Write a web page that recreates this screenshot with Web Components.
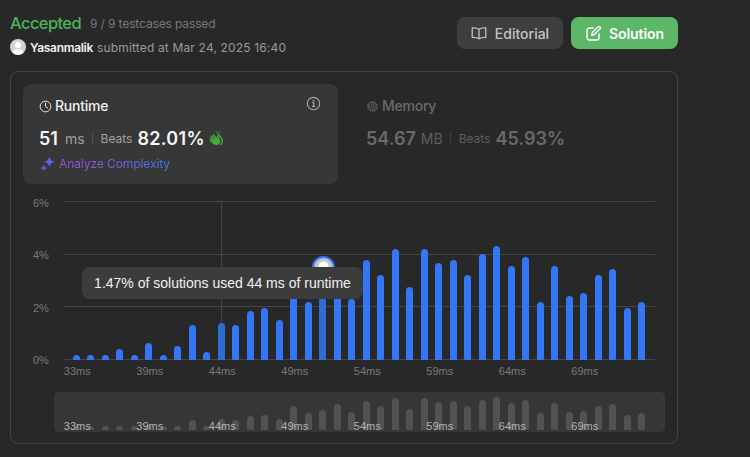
<!DOCTYPE html>
<html><head><meta charset="utf-8"><title>Submission</title>
<style>
html,body{margin:0;height:100%;background:#282828;overflow:hidden}
body{font-family:Inter,"Liberation Sans",sans-serif;color:#fff}
</style></head><body>
<lc-page>
  <lc-header slot="header"></lc-header>
  <lc-panel>
    <lc-stat slot="stats" active label="Runtime" icon="clock" value="51" unit="ms" beats="82.01%"></lc-stat>
    <lc-stat slot="stats" label="Memory" icon="chip" value="54.67" unit="MB" beats="45.93%"></lc-stat>
    <lc-chart slot="chart"></lc-chart>
  </lc-panel>
</lc-page>
<script>
const ICONS={
 clock:'<circle cx="8" cy="8" r="6.6" fill="none" stroke="currentColor" stroke-width="1.2"/><path d="M8 3.8V8l2.8 1.8" fill="none" stroke="currentColor" stroke-width="1.2" stroke-linecap="round"/>',
 chip:'<rect x="3.6" y="3.6" width="8.8" height="8.8" rx="1.6" fill="none" stroke="currentColor" stroke-width="1.1"/><rect x="6" y="6" width="4" height="4" rx=".6" fill="none" stroke="currentColor" stroke-width="1.1"/><path d="M5.5 1.5v1.8M8 1.5v1.8M10.5 1.5v1.8M5.5 12.7v1.8M8 12.7v1.8M10.5 12.7v1.8M1.5 5.5h1.8M1.5 8h1.8M1.5 10.5h1.8M12.7 5.5h1.8M12.7 8h1.8M12.7 10.5h1.8" stroke="currentColor" stroke-width="1"/>',
 info:'<circle cx="8" cy="8" r="6.6" fill="none" stroke="currentColor" stroke-width="1.2"/><circle cx="8" cy="4.9" r="1" fill="currentColor"/><path d="M6.5 7.2H8.3V11M6.4 11.2h3.4" fill="none" stroke="currentColor" stroke-width="1.3"/>',
 book:'<path d="M8 4.2C6.6 3 4.4 2.6 1.2 2.8V12.4C4.4 12.3 6.6 12.7 8 13.8 9.4 12.7 11.6 12.3 14.8 12.4V2.8C11.6 2.6 9.4 3 8 4.2ZM8 4.2V13.8" fill="none" stroke="currentColor" stroke-width="1.25" stroke-linejoin="round"/>',
 edit:'<path d="M8 3H4.2A2.2 2.2 0 0 0 2 5.2V12.8A2.2 2.2 0 0 0 4.2 15H11.8A2.2 2.2 0 0 0 14 12.8V9" fill="none" stroke="currentColor" stroke-width="1.4" stroke-linecap="round"/><path d="M6.8 10.2 7.4 7.4 13 1.8A1.3 1.3 0 0 1 15 3.8L9.4 9.5Z" fill="none" stroke="currentColor" stroke-width="1.4" stroke-linejoin="round"/>',
 sparkle:'<defs><linearGradient id="sg" x1="0" y1="1" x2="1" y2="0"><stop offset="0" stop-color="#4f62f2"/><stop offset="1" stop-color="#7a58e6"/></linearGradient></defs><path fill="url(#sg)" d="M10 .8 11.6 4.6 15.6 6.3 11.6 8 10 11.8 8.4 8 4.4 6.3 8.4 4.6ZM4 9 5.1 11.7 7.8 12.8 5.1 13.9 4 16.6 2.9 13.9.2 12.8 2.9 11.7Z"/>',
 clap:'<g stroke="#46a83c" stroke-linecap="round" fill="none" stroke-width="1.6"><path d="M1.6 7.6 6 11.8M2.6 5.4 7 10M4.8 4.2 8.500 8.500M1.600 10.200 5 13.400"/><path d="M9.200 6 10.700 10"/><path d="M9.400 3.200 13 7.500C14.700 10 14.300 12.500 12.600 14.300"/></g><ellipse cx="8" cy="11.300" rx="3.800" ry="3.600" fill="#46a83c"/><path d="M7.800.4 8.200 1.900M10 .2V1.800M12.100.8 11.600 2.200" stroke="#46a83c" stroke-width=".8" fill="none"/>',
 user:'<circle cx="8" cy="8" r="8" fill="#d4d4d4"/><circle cx="8" cy="6" r="3.1" fill="#fff"/><path d="M2.500 13.600C3.500 11 5.600 10 8 10S12.500 11 13.500 13.600A8 8 0 0 1 2.500 13.600Z" fill="#fff"/>'
};
class LcIcon extends HTMLElement{
  constructor(){super();this.attachShadow({mode:'open'});}
  connectedCallback(){
    const s=this.getAttribute('size')||16;
    this.shadowRoot.innerHTML=`<style>:host{display:inline-flex;flex:none;width:${s}px;height:${s}px}svg{display:block;width:100%;height:100%}</style><svg viewBox="0 0 16 16">${ICONS[this.getAttribute('name')]}</svg>`;
  }
}
class LcPage extends HTMLElement{
  constructor(){super();this.attachShadow({mode:'open'}).innerHTML=`<style>:host{display:flex;flex-direction:column;gap:16px;width:668px;padding:11px 0 0 10px;font-family:Inter,"Liberation Sans",sans-serif}</style><slot name="header"></slot><slot></slot>`;}
}
class LcBtn extends HTMLElement{
  constructor(){super();this.attachShadow({mode:'open'}).innerHTML=`<style>:host{display:inline-flex;align-items:center;justify-content:center;gap:8px;height:32px;border-radius:8px;font-size:14px;font-weight:500;box-sizing:border-box;background:var(--bg);color:var(--fg)}</style><slot></slot>`;}
}
class LcHeader extends HTMLElement{
  constructor(){super();this.attachShadow({mode:'open'}).innerHTML=`<style>
  :host{display:flex;justify-content:space-between;align-items:flex-start}
  .left{display:flex;flex-direction:column;gap:4px}
  .r1{display:flex;align-items:center;height:24px;gap:9px}
  .acc{font-size:16.5px;font-weight:500;color:#4cb45a;letter-spacing:-.6px;line-height:24px}
  .tc{font-size:12px;color:#787878;letter-spacing:-.13px}
  .r2{display:flex;align-items:center;height:16px;font-size:12px;color:#9a9a9a;gap:4px}
  .name{color:#f2f2f2;font-weight:600;letter-spacing:-.3px}
  .sub{letter-spacing:.16px}
  .btns{display:flex;gap:8px;margin-top:6px}
  .e{--bg:#3e3e3e;--fg:#c4c4c8;width:106px}
  .s{--bg:#5cb768;--fg:#fff;width:107px;font-weight:600;letter-spacing:-.1px}
  </style>
  <div class="left"><div class="r1"><span class="acc">Accepted</span><span class="tc">9 / 9 testcases passed</span></div>
  <div class="r2"><lc-icon name="user" size="16"></lc-icon><span class="name">Yasanmalik</span><span class="sub">submitted at Mar 24, 2025 16:40</span></div></div>
  <div class="btns"><lc-btn class="e"><lc-icon name="book"></lc-icon><span>Editorial</span></lc-btn><lc-btn class="s"><lc-icon name="edit"></lc-icon><span>Solution</span></lc-btn></div>`;}
}
class LcPanel extends HTMLElement{
  constructor(){super();this.attachShadow({mode:'open'}).innerHTML=`<style>
  :host{display:flex;flex-direction:column;gap:13px;box-sizing:border-box;width:668px;height:373px;padding:12px;border:1px solid #454545;border-radius:8px}
  .stats{display:grid;grid-template-columns:315px 315px;gap:12px}
  </style><div class="stats"><slot name="stats"></slot></div><slot name="chart"></slot>`;}
}
class LcStat extends HTMLElement{
  constructor(){super();this.attachShadow({mode:'open'});}
  connectedCallback(){
    const a=this.hasAttribute('active'),g=n=>this.getAttribute(n);
    this.shadowRoot.innerHTML=`<style>
    :host{display:flex;flex-direction:column;box-sizing:border-box;height:100px;padding:12px 17px 0 16px;border-radius:8px;background:${a?'#373737':'transparent'}}
    .top{display:flex;justify-content:space-between;align-items:flex-start;height:20px}
    .lab{display:flex;align-items:center;gap:2px;font-size:14px;font-weight:500;line-height:20px;letter-spacing:-.25px;color:${a?'#f0f0f0':'#6a6a6a'}}
    .lab lc-icon{margin-right:1px}
    .nums{display:flex;align-items:center;height:28px;margin-top:8px;color:${a?'#f5f5f5':'#6a6a6a'}}
    .v{font-size:18px;font-weight:600}
    .v.pct{letter-spacing:${a?'.3px':'0'}}
    .u{font-size:14px;color:${a?'#a0a0a0':'#5e5e5e'};margin-left:${a?7:5}px}
    .d{width:1px;height:12px;background:${a?'#505050':'#3e3e3e'};margin:0 8px 0 7px}
    .b{font-size:12px;color:${a?'#a0a0a0':'#5e5e5e'};margin-right:${a?5:5}px}
    .az{display:flex;align-items:center;gap:4px;height:16px;margin-top:3px;margin-left:1px;font-size:12px;letter-spacing:-.08px}
    .az span{background:linear-gradient(90deg,#a050d0,#3f75f0);-webkit-background-clip:text;background-clip:text;color:transparent}
    .info{color:#a8a8a8}
    .clap{margin-left:4px}
    </style>
    <div class="top"><div class="lab"><lc-icon name="${g('icon')}" size="13"></lc-icon><span>${g('label')}</span></div>${a?'<lc-icon class="info" name="info" size="15"></lc-icon>':''}</div>
    <div class="nums"><span class="v">${g('value')}</span><span class="u">${g('unit')}</span><span class="d"></span><span class="b">Beats</span><span class="v pct">${g('beats')}</span>${a?'<lc-icon class="clap" name="clap" size="15"></lc-icon>':''}</div>
    ${a?'<div class="az"><lc-icon name="sparkle" size="15"></lc-icon><span>Analyze Complexity</span></div>':''}`;
  }
}
const H=[5.3,5.3,5.3,11,5.3,17,5.3,14,35,8,37,35,49,52,40,83,58,69,92,61,100,85,111,73,111,97,100,85,106,114,94,103,58,94,64,67,85,91,52,58];
const XL=['33ms','39ms','44ms','49ms','54ms','59ms','64ms','69ms'];
class LcChart extends HTMLElement{
  constructor(){super();
    const bars=H.map((h,i)=>`<i class="${i==10||i==17?'dim':''}" style="height:${h}px"></i>`).join('');
    const mini=H.map(h=>`<i style="height:${Math.max(4.5,h*.288).toFixed(1)}px"></i>`).join('');
    const xl=XL.map(t=>`<span>${t}</span>`).join('');
    this.attachShadow({mode:'open'}).innerHTML=`<style>
    :host{display:block;width:642px;font-family:"Liberation Sans",Arial,sans-serif;font-size:11px}
    .top{display:flex;height:171px}
    .y{display:flex;flex-direction:column;justify-content:space-between;box-sizing:border-box;width:41px;padding-left:10px;height:170px;color:#7a7a7a;line-height:13px}
    .plot{position:relative;display:grid;width:591px;height:159px;margin-top:4px}
    .plot>*{grid-area:1/1}
    .lines{display:flex;flex-direction:column;justify-content:space-between}
    .lines b{display:block;height:1px;background:#454545}
    .bars{position:relative;display:flex;align-items:flex-end;gap:7.5px;padding-left:8.8px}
    .bars i{flex:none;display:block;width:7px;background:#3377f6;border-radius:3.5px 3.5px 0 0}
    .bars i.dim{background:#2f6dd2}
    .cross{position:absolute;left:157px;top:0;bottom:0;width:1px;background:#454545}
    .dot{position:absolute;left:247.5px;top:54.5px;width:23px;height:23px;box-sizing:border-box;border-radius:50%;border:2.5px solid #3377f6;background:radial-gradient(circle at 50% 45%,#fff 0 4px,#c4c4c4 6px)}
    .tip{position:absolute;left:18px;top:66px;width:281px;height:32px;box-sizing:border-box;border-radius:8px;background:#3c3c3c;color:#f2f2f2;font-size:14px;line-height:32px;text-align:center;white-space:nowrap}
    .xl{display:grid;grid-template-columns:repeat(8,72.5px);margin-left:18px;color:#7a7a7a;height:13px;line-height:13px;text-align:center;margin-top:-3px}
    .mini{display:grid;width:611px;height:40px;margin:14px 0 0 31px;border-radius:5px;background:#363636;overflow:hidden}
    .mini>*{grid-area:1/1}
    .mini .mb{display:flex;align-items:flex-end;gap:7.5px;padding:0 0 2px 18.8px}
    .mini .mb i{flex:none;display:block;width:7px;background:#525252;border-radius:3.5px 3.5px 0 0}
    .mini .xl{margin:0 0 -1px -13px;align-self:end;color:#b4b4b4}
    </style>
    <div class="top"><div class="y"><span>6%</span><span>4%</span><span>2%</span><span>0%</span></div>
      <div class="plot"><div class="cross"></div><div class="lines"><b></b><b></b><b></b><b></b></div><div class="bars">${bars}</div><div class="dot"></div><div class="tip">1.47% of solutions used 44 ms of runtime</div></div></div>
    <div class="xl">${xl}</div>
    <div class="mini"><div class="mb">${mini}</div><div class="xl">${xl}</div></div>`;
  }
}
customElements.define('lc-icon',LcIcon);
customElements.define('lc-btn',LcBtn);
customElements.define('lc-header',LcHeader);
customElements.define('lc-stat',LcStat);
customElements.define('lc-chart',LcChart);
customElements.define('lc-panel',LcPanel);
customElements.define('lc-page',LcPage);
</script>
</body></html>
